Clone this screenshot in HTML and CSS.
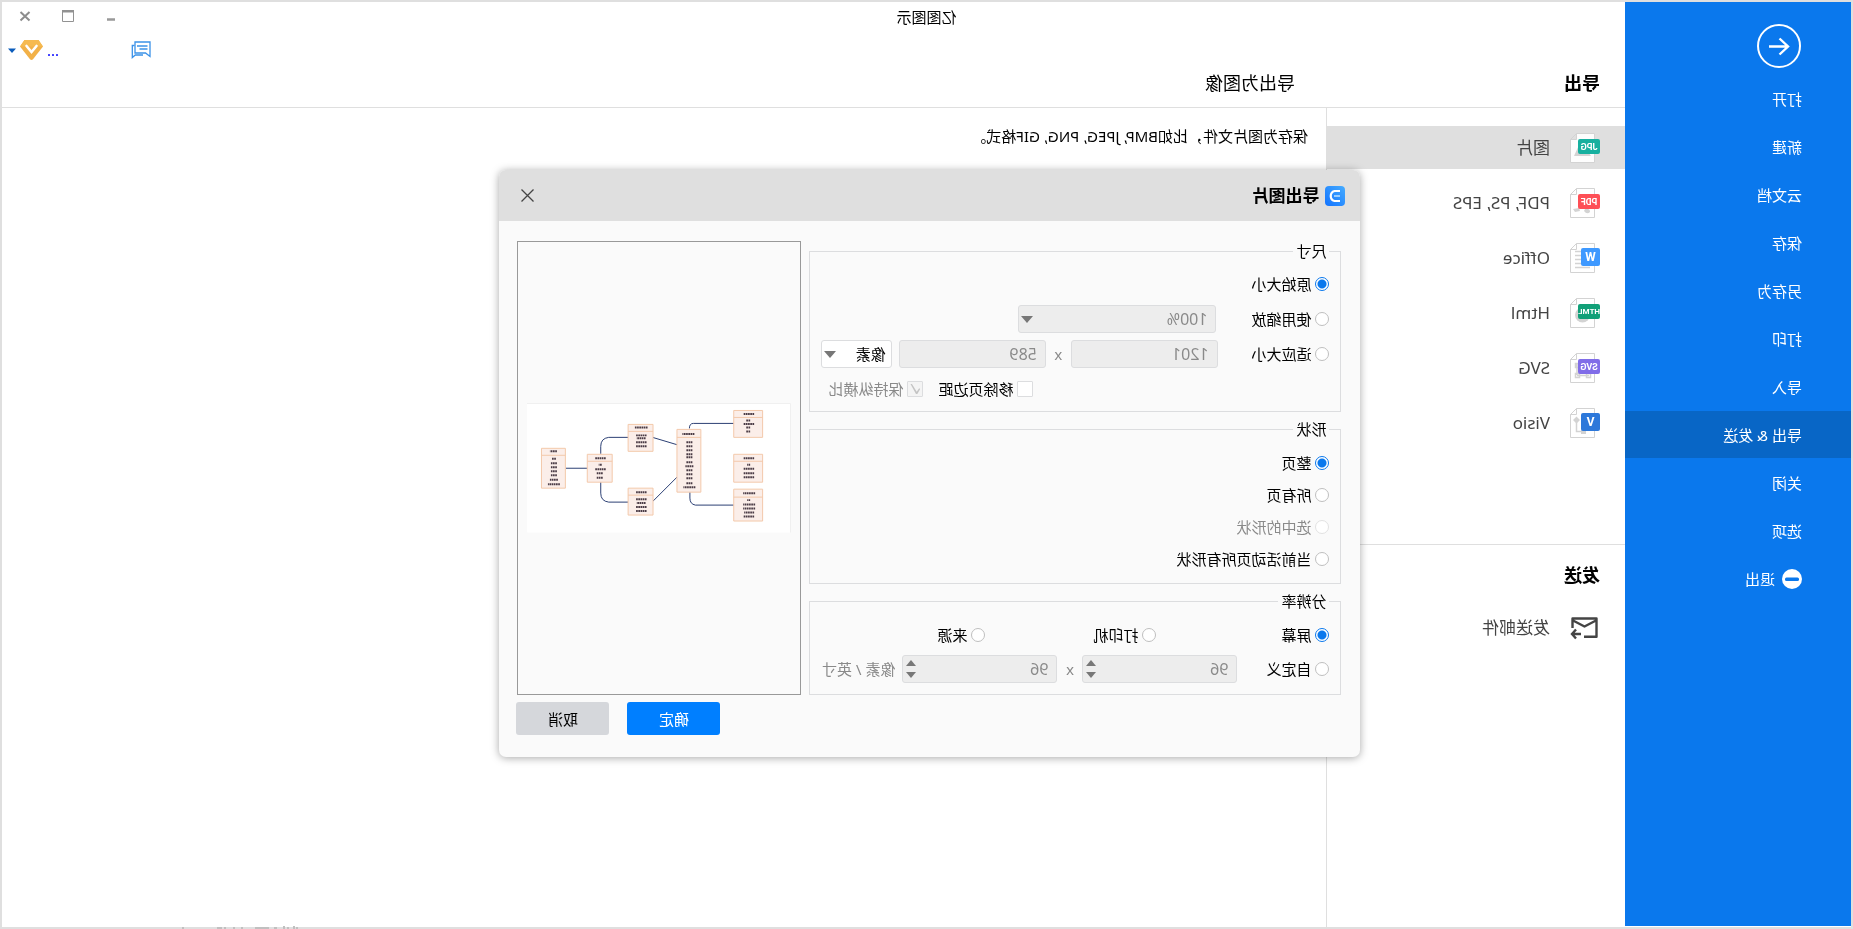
FILE: index.html
```html
<!DOCTYPE html>
<html lang="zh-CN">
<head>
<meta charset="utf-8">
<title>亿图图示</title>
<link rel="stylesheet" href="styles.css">
</head>
<body>
<div class="window">
  <nav class="sidebar">
    <button class="back" aria-label="返回">
      <svg width="44" height="44" viewBox="0 0 44 44" fill="none" stroke="#fff" stroke-width="2"><circle cx="22" cy="22" r="21"/><path d="M32 22.500H13M21.500 14.500l-8.500 8 8.500 8" stroke-width="2.400"/></svg>
    </button>
    <a href="#">打开</a>
    <a href="#">新建</a>
    <a href="#">云文档</a>
    <a href="#">保存</a>
    <a href="#">另存为</a>
    <a href="#">打印</a>
    <a href="#">导入</a>
    <a href="#" class="current">导出 &amp; 发送</a>
    <a href="#">关闭</a>
    <a href="#">选项</a>
    <a href="#" class="exit"><svg width="20" height="20" viewBox="0 0 20 20"><circle cx="10" cy="10" r="10" fill="#fff"/><rect x="3" y="8.500" width="14" height="3.400" rx="1.500" fill="#0a78ed"/></svg>退出</a>
  </nav>

  <main class="main">
    <header class="top">
      <div class="titlebar">
        <h1>亿图图示</h1>
        <div class="winbuttons">
          <button aria-label="最小化"><svg width="12" height="12" viewBox="0 0 12 12"><path d="M2 9.500h8" stroke="#999" stroke-width="2.500"/></svg></button>
          <button aria-label="最大化"><svg width="12" height="12" viewBox="0 0 12 12" fill="none" stroke="#929292"><path d="M.5 1v10.500h11V1"/><path d="M0 1.250h12" stroke-width="2.500"/></svg></button>
          <button aria-label="关闭"><svg width="12" height="12" viewBox="0 0 12 12" stroke="#8d8d8d" stroke-width="2"><path d="M1.500 2l9 8.500M10.500 2l-9 8.500"/></svg></button>
        </div>
      </div>
      <div class="account">
        <button class="chat" aria-label="消息"><svg width="20" height="18" viewBox="0 0 20 18" fill="none" stroke="#3b92e8" stroke-width="1.300"><path d="M1 1h15v11H5.500L1 15.500z"/><path d="M3.500 5h10.500M3.500 8h8M16.500 4.500h2.200v12l-3-2.500H8"/></svg></button>
        <a href="#" class="user">...</a>
        <svg width="23" height="20" viewBox="0 0 23 20"><path d="M4.500 0h14L23 6.500 13 19.200q-1.500 1.600-3 0L0 6.500z" fill="#f2b148"/><path d="M4.500 0h14L23 6.500H0z" fill="#f6ba50"/><path d="M6.500 6l5 6 5-6" fill="none" stroke="#fff" stroke-width="2.600" stroke-linecap="round"/></svg>
        <svg class="caret" width="8" height="5" viewBox="0 0 8 5"><path d="M0 .5h8L4 5z" fill="#0b5cbb"/></svg>
      </div>
      <div class="headings"><h2 class="strong">导出</h2><h2>导出为图像</h2></div>
    </header>

    <div class="content">
      <aside class="panel">
        <ul class="formats">
          <li class="selected"><svg class="fmt" viewBox="0 0 30 30"><path class="page" d="M5.500.5h18l6 6v23h-24zM23.500.5v6h6"/><path class="deco" d="M9 23l5-7 4 5 3-9 5 11z"/><rect y="6" width="22" height="15" rx="2" fill="#17b09f"/><text x="11" y="17">JPG</text></svg><a href="#">图片</a></li>
          <li><svg class="fmt" viewBox="0 0 30 30"><path class="page" d="M5.500.5h18l6 6v23h-24zM23.500.5v6h6"/><path class="deco" d="M10 24q0-4 5-3l1 2q-3 4-6 1zM21 20l6 1-2 3-5-1z"/><rect y="6" width="22" height="15" rx="2" fill="#fe4f56"/><text x="11" y="17">PDF</text></svg><a href="#">PDF, PS, EPS</a></li>
          <li><svg class="fmt" viewBox="0 0 30 30"><path class="page" d="M5.500.5h18l6 6v23h-24zM23.500.5v6h6"/><path class="line" d="M19 8.500h6M19 12.500h6M19 16.500h6M19 20.500h6M10 24.500h15"/><rect y="5" width="19" height="18" rx="2" fill="#3e99ff"/><text class="big" x="9.500" y="18">W</text></svg><a href="#">Office</a></li>
          <li><svg class="fmt" viewBox="0 0 30 30"><path class="page" d="M5.500.5h18l6 6v23h-24zM23.500.5v6h6"/><circle cx="17.500" cy="17" r="7.500" class="deco"/><rect y="6" width="22" height="15" rx="2" fill="#11a078"/><text class="small" x="11" y="16">HTML</text></svg><a href="#">Html</a></li>
          <li><svg class="fmt" viewBox="0 0 30 30"><path class="page" d="M5.500.5h18l6 6v23h-24zM23.500.5v6h6"/><path class="line" d="M11 22.500h12M23 10v12M9.500 20.500h4v4h-4zM20.500 20.500h4v4h-4zM20.500 10.500h4v4h-4z"/><rect y="6" width="22" height="15" rx="2" fill="#816de8"/><text x="11" y="17">SVG</text></svg><a href="#">SVG</a></li>
          <li><svg class="fmt" viewBox="0 0 30 30"><path class="page" d="M5.500.5h18l6 6v23h-24zM23.500.5v6h6"/><path class="deco" d="M20 12l3.500-3.500L27 12l-3.500 3.500zM14 22h5v4h-5z"/><path class="line" d="M23.500 14v9.500H17"/><rect y="5" width="19" height="18" rx="2" fill="#2d78da"/><text class="big" x="9.500" y="18">V</text></svg><a href="#">Visio</a></li>
        </ul>
        <section class="send">
          <h2 class="strong">发送</h2>
          <a href="#" class="mail"><svg width="30" height="24" viewBox="0 0 30 24" fill="none" stroke="#444" stroke-width="2.400"><path d="M16 20.800H3.500V2.500h24v9.500M4 4.500l11.500 6 11.500-6" stroke-linejoin="round"/><path d="M19 18h9M24 13.500l4 4.500-4 4.500"/></svg>发送邮件</a>
        </section>
      </aside>
      <section class="detail">
        <p>保存为图片文件，比如BMP, JPEG, PNG, GIF格式。</p>
      </section>
    </div>
  </main>

  <div class="overlay">
    <form class="dialog" role="dialog" aria-labelledby="dlg-title">
      <header class="dlg-head">
        <svg width="20" height="20" viewBox="0 0 20 20"><defs><linearGradient id="lg" x1="0" y1="0" x2="1" y2="1"><stop offset="0" stop-color="#46acff"/><stop offset="1" stop-color="#1273ff"/></linearGradient></defs><rect width="20" height="20" rx="4" fill="url(#lg)"/><path d="M5 5h5.500a5.200 5.200 0 0 1 0 10H5" fill="none" stroke="#fff" stroke-width="2.200"/><path d="M5 10h6" stroke="#a9d6ff" stroke-width="1.800"/></svg>
        <h2 id="dlg-title">导出图片</h2>
        <button type="button" class="close" aria-label="关闭"><svg width="13" height="13" viewBox="0 0 13 13" stroke="#444" stroke-width="1.300"><path d="M.5.5l12 12M12.500.5l-12 12"/></svg></button>
      </header>
      <div class="dlg-body">
        <div class="groups">
          <fieldset class="size">
            <legend>尺寸</legend>
            <div class="row"><label><input type="radio" name="size" checked>原始大小</label></div>
            <div class="row">
              <label class="lead"><input type="radio" name="size">使用缩放</label>
              <span class="pick scale"><select disabled aria-label="缩放"><option>100%</option></select></span>
            </div>
            <div class="row">
              <label class="lead"><input type="radio" name="size">适应大小</label>
              <input class="field" type="text" value="1201" disabled aria-label="宽">
              <span class="times">x</span>
              <input class="field" type="text" value="589" disabled aria-label="高">
              <span class="pick unit"><select aria-label="单位"><option>像素</option></select></span>
            </div>
            <div class="row checks">
              <label><input type="checkbox">移除页边距</label>
              <label class="off"><input type="checkbox" checked disabled>保持纵横比</label>
            </div>
          </fieldset>
          <fieldset class="shape">
            <legend>形状</legend>
            <label><input type="radio" name="shape" checked>整页</label>
            <label><input type="radio" name="shape">所有页</label>
            <label class="off"><input type="radio" name="shape" disabled>选中的形状</label>
            <label><input type="radio" name="shape">当前活动页所有形状</label>
          </fieldset>
          <fieldset class="res">
            <legend>分辨率</legend>
            <div class="row sources">
              <label><input type="radio" name="res" checked>屏幕</label>
              <label><input type="radio" name="res">打印机</label>
              <label><input type="radio" name="res">来源</label>
            </div>
            <div class="row">
              <label class="lead"><input type="radio" name="res">自定义</label>
              <span class="spin"><input class="field" type="number" value="96" disabled aria-label="横向分辨率"></span>
              <span class="times">x</span>
              <span class="spin"><input class="field" type="number" value="96" disabled aria-label="纵向分辨率"></span>
              <span class="suffix">像素 / 英寸</span>
            </div>
          </fieldset>
        </div>
        <div class="preview">
          <svg viewBox="0 0 265 130" role="img" aria-label="预览">
            <rect width="265" height="130" fill="#fff"/>
            <path d="M.5 130V.5H265" fill="none" stroke="#f0f0f0"/>
            <g fill="none" stroke="#2b3f73" stroke-width="1">
              <path d="M57 20.500H98q4 0 4 5M57 102.500H96q5.500-1 5.500-7V89M114 42l25-7.500M114 74l25 25M163 34.500h20q8 1 8 9V51M163 99.500h20q8-1 8-9V79M204 65.500h22"/>
            </g>
            <g fill="#fbeee9" stroke="#f3c9ab">
              <path d="M28.500 7.500h29v27h-29zM28.500 14.500h29"/>
              <path d="M28.500 51.500h29v28h-29zM28.500 58.500h29"/>
              <path d="M28.500 86.500h29v32h-29zM28.500 94.500h29"/>
              <path d="M90.500 26.500h24v63h-24zM90.500 34.500h24"/>
              <path d="M138.500 21.500h25v27h-25zM138.500 28.500h25"/>
              <path d="M138.500 85.500h25v27h-25zM138.500 92.500h25"/>
              <path d="M179.500 51.500h25v28h-25zM179.500 58.500h25"/>
              <path d="M226.500 45.500h24v40h-24zM226.500 52.500h24"/>
            </g>
            <g stroke="#4a3b45" stroke-width="2" stroke-dasharray="1.700 .5">
              <path d="M37 11h11M41 17.500h4M37 21h11M41 24.500h4M41 28.500h4"/>
              <path d="M37 55.500h11M41 62h3M37 66h11M37 70.500h11M37 74.500h11"/>
              <path d="M36 90.500h12M41 97.500h3M36 102h12M36 106h12M37 110h10M37 114h11"/>
              <path d="M97 31h12M99 39.500h6M99 43.500h6M99 47.500h6M99 51.500h6M99 54.500h6M99 59.500h6M98 63.500h8M99 67.500h6M99 71.500h6M99 75.500h6M99 80.500h6M96 84.500h12"/>
              <path d="M144 24.500h13M145 32.500h11M146 35.500h9M145 39.500h11M145 43.500h11"/>
              <path d="M145 89.500h11M145 96.500h11M146 100.500h9M145 104.500h11M145 108.500h11"/>
              <path d="M186 55.500h11M190 62h3M186 66.500h11M189 70.500h6M189 75h6"/>
              <path d="M235 48.500h7M236 56h4M235 60.500h6M235 64.500h6M235 68.500h6M235 72.500h6M234 77h8M232 81.500h12"/>
            </g>
          </svg>
        </div>
      </div>
      <footer class="dlg-foot">
        <button type="button" class="ok">确定</button>
        <button type="button" class="cancel">取消</button>
      </footer>
    </form>
  </div>

  <svg class="ghost" width="122" height="3" viewBox="0 0 122 3" aria-hidden="true" stroke="#c0c0c0" stroke-width="2"><path d="M3 2h2M7 0v3M12 2h2M17 0v3M24 2h3M32 2h14M58 2h2M66 2h2M75 2h2M79 2h5M118 1v2"/></svg>
</div>
</body>
</html>
```
FILE: styles.css
```css
* { box-sizing: border-box; }
html, body { height: 100%; margin: 0; }
body {
  font: 15px/20px "Noto Sans", "Noto Sans CJK SC", sans-serif;
  color: #000;
  background: #fff;
}
h1, h2, p, ul { margin: 0; padding: 0; font-weight: 400; }
button, input, select { font: inherit; color: inherit; margin: 0; }
button { padding: 0; border: 0; background: none; }
a { color: inherit; text-decoration: none; }
svg { display: block; flex: none; }

/* The whole window is drawn as a mirror image. */
.window {
  position: relative;
  display: grid;
  grid-template-columns: 226px 1fr;
  min-height: 100vh;
  border: 2px solid #dfdfdf;
  transform: scaleX(-1);
}

.sidebar {
  display: flex;
  flex-direction: column;
  gap: 1px;
  padding-top: 22px;
  margin-bottom: 1px;
  background: #0a78ed;
  color: #fff;
}
.back { width: 44px; height: 44px; margin: 0 0 6px 50px; }
.sidebar a {
  display: flex;
  align-items: center;
  height: 47px;
  padding: 1px 0 0 49px;
}
.sidebar .current { background: #0866c6; }
.sidebar .exit { gap: 7px; padding-top: 0; }

.main { display: flex; flex-direction: column; min-width: 0; }
.top { border-bottom: 1px solid #dfdfdf; }
.titlebar { position: relative; height: 32px; padding-right: 226px; }
.titlebar h1 { font-size: 15px; line-height: 30px; text-align: center; }
.winbuttons {
  position: absolute;
  top: 8px;
  right: 17px;
  display: flex;
  gap: 31px;
}
.account {
  display: flex;
  align-items: center;
  justify-content: flex-end;
  height: 32px;
  padding-right: 6px;
}
.chat { margin-right: 72px; }
.user { margin-right: 4px; color: #00f; line-height: 16px; }
.caret { margin-left: 4px; }
.headings {
  display: grid;
  grid-template-columns: 305px 1fr;
  height: 41px;
  padding: 0 0 8px 25px;
  align-items: center;
}
h2 { font-size: 18px; line-height: 24px; }
.strong { font-weight: 700; }

.content { display: grid; grid-template-columns: 299px 1fr; flex: 1; }
.panel { border-right: 1px solid #dfdfdf; color: #444; }
.formats {
  display: flex;
  flex-direction: column;
  gap: 12px;
  padding: 18px 0 100px;
  list-style: none;
  font-size: 17px;
}
.formats li {
  display: flex;
  align-items: center;
  gap: 20px;
  height: 43px;
  padding-left: 25px;
}
.formats .selected { background: #dfdfdf; }
.fmt { width: 30px; height: 30px; }
.fmt .page { fill: #fff; stroke: #d3d3d3; }
.selected .fmt .page { fill: #fdfdfd; }
.fmt .deco { fill: #d3d3d3; }
.fmt .line { fill: none; stroke: #d3d3d3; stroke-width: 1.5; }
.fmt text {
  fill: #fff;
  font: 700 9px "Roboto", sans-serif;
  text-anchor: middle;
}
.fmt .small { font-size: 8px; }
.fmt .big { font-size: 12px; }
.send { padding: 18px 0 0 25px; border-top: 1px solid #dfdfdf; }
.send h2 { color: #000; }
.mail {
  display: flex;
  align-items: center;
  gap: 20px;
  height: 44px;
  margin-top: 19px;
  font-size: 17px;
}
.detail { padding: 18px; }

.overlay {
  position: absolute;
  inset: 0;
  display: grid;
  place-items: center;
  padding: 0 7px 2px 0;
}
.dialog {
  width: 861px;
  border-radius: 7px;
  background: #fafafa;
  box-shadow: 0 1px 8px rgba(0, 0, 0, .35);
}
.dlg-head {
  display: flex;
  align-items: center;
  gap: 6px;
  height: 51px;
  padding: 0 22px 0 15px;
  border-radius: 7px 7px 0 0;
  background: #dfdfdf;
}
.dlg-head h2 { font-size: 17px; font-weight: 700; }
.close { margin-left: auto; }
.dlg-body {
  display: grid;
  grid-template-columns: 1fr 284px;
  gap: 8px;
  padding: 20px 18px 7px 19px;
}
.groups { display: grid; gap: 7px; }
fieldset {
  display: block;
  min-width: 0;
  margin: 0;
  padding: 9px 11px 8px;
  border: 1px solid #dcdddf;
}
legend { padding: 0 3px; }
.row { display: flex; align-items: center; height: 28px; }
.size .row + .row { margin-top: 7px; }
.size .lead { width: 113px; }
.checks { gap: 15px; padding-left: 296px; }
.shape { padding: 14px 11px; }
.shape label + label { margin-top: 12px; }
.res { padding: 10px 11px 11px; }
.res .row + .row { margin-top: 6px; }
.res .lead { width: 92px; }
.sources { display: grid; grid-template-columns: 173px 171px 1fr; }

label { display: flex; align-items: center; gap: 4px; white-space: nowrap; }
.off, .times, .suffix { color: #8a8a8a; }
input[type="radio"], input[type="checkbox"] {
  appearance: none;
  flex: none;
  width: 14px;
  height: 14px;
  border: 1px solid #bfbfbf;
  border-radius: 50%;
  background: #fff;
}
input[type="radio"]:checked {
  border-color: #0a78ed;
  background: radial-gradient(circle, #0a78ed 4px, #fff 5px);
}
input[type="radio"]:disabled { border-color: #e2e2e2; }
input[type="checkbox"] {
  width: 16px;
  height: 16px;
  border-color: #dcdddf;
  border-radius: 1px;
}
input[type="checkbox"]:checked { background: #f4f4f4; }
input[type="checkbox"]:checked::before {
  content: "";
  display: block;
  height: 10px;
  margin: 2px;
  background: #c4c4c4;
  clip-path: polygon(0 45%, 15% 45%, 38% 78%, 85% 0, 100% 0, 45% 100%, 32% 100%);
}
.field, select {
  appearance: none;
  width: 147px;
  height: 28px;
  padding: 0 8px;
  border: 1px solid #dcdddf;
  border-radius: 3px;
  background: #fff;
}
.field:disabled, select:disabled {
  background: #ededed;
  color: #8a8a8a;
  font-size: 16px;
  opacity: 1;
}
.times { width: 25px; text-align: center; }
.pick, .spin { position: relative; display: block; }
.pick select { width: 100%; }
.scale { width: 198px; }
.unit { width: 71px; margin-left: 7px; }
.unit select { padding: 0 5px; }
.pick::after {
  content: "";
  position: absolute;
  top: 11px;
  right: 3px;
  border: solid transparent;
  border-width: 7px 6px 0;
  border-top-color: #777;
  pointer-events: none;
}
.spin .field { width: 155px; appearance: textfield; }
.spin::before, .spin::after {
  content: "";
  position: absolute;
  right: 4px;
  border: solid transparent;
  pointer-events: none;
}
.spin::before { top: 5px; border-width: 0 5px 6px; border-bottom-color: #777; }
.spin::after { bottom: 5px; border-width: 6px 5px 0; border-top-color: #777; }
.suffix { margin-left: 7px; white-space: nowrap; }

.preview {
  display: flex;
  align-items: center;
  padding: 0 9px;
  border: 1px solid #999;
}
.preview svg { width: 100%; }
.dlg-foot {
  display: flex;
  justify-content: flex-end;
  gap: 18px;
  padding: 0 17px 22px;
}
.dlg-foot button { width: 93px; height: 33px; border-radius: 3px; }
.ok { background: #007fff; color: #fff; }
.cancel { background: #d5d7db; }

.ghost { position: absolute; left: 1550px; bottom: -2px; }
```
